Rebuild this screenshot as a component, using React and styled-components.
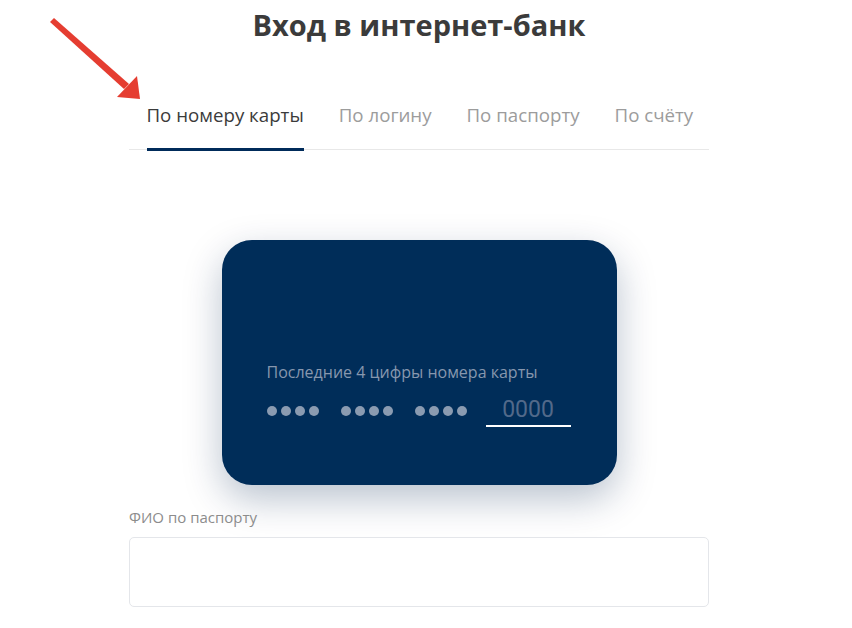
import React from "react";
import styled, { createGlobalStyle } from "styled-components";

const Global = createGlobalStyle`
  html, body { margin: 0; padding: 0; background: #fff; }
  body { font-family: "Open Sans", "Noto Sans", sans-serif; }
`;

const Page = styled.div`
  position: relative;
  width: 852px;
  height: 628px;
  overflow: hidden;
  background: #fff;
`;

const Container = styled.div`
  width: 580px;
  margin-left: 129px;
  display: flex;
  flex-direction: column;
`;

const Title = styled.h1`
  margin: 6px 0 0;
  font-size: 29px;
  font-weight: 700;
  line-height: 38px;
  color: #3b3b3b;
  text-align: center;
`;

const Tabs = styled.div`
  display: flex;
  margin-top: 58px;
  border-bottom: 1px solid #e8e8e8;
`;

const Tab = styled.div`
  padding: 0 17.5px;
  font-size: 18.7px;
  line-height: 26px;
  color: ${(p) => (p.$active ? "#3b3b3b" : "#9c9c9c")};
  white-space: nowrap;
`;

const TabLabel = styled.div`
  padding-bottom: 20px;
  border-bottom: 3px solid ${(p) => (p.$active ? "#002b5a" : "transparent")};
  margin-bottom: -2px;
`;

const CardWrap = styled.div`
  display: flex;
  justify-content: center;
  margin-top: 90px;
`;

const Card = styled.div`
  width: 395px;
  height: 245px;
  border-radius: 30px;
  background: #002d59;
  box-shadow: 0 14px 38px rgba(0, 35, 80, 0.28);
  box-sizing: border-box;
  padding: 121px 45px 0;
  display: flex;
  flex-direction: column;
`;

const CardLabel = styled.div`
  font-size: 16px;
  line-height: 22px;
  color: #8797ae;
`;

const DigitsRow = styled.div`
  display: flex;
  align-items: center;
  margin-top: 12px;
`;

const DotGroup = styled.div`
  display: flex;
  gap: 4px;
  margin-right: 22px;
`;

const Dot = styled.span`
  width: 10px;
  height: 10px;
  border-radius: 50%;
  background: #8a9bb1;
`;

const LastDigits = styled.div`
  width: 85px;
  margin-left: -3px;
  text-align: center;
  font-family: "Roboto", "Open Sans", sans-serif;
  font-size: 23px;
  line-height: 30px;
  color: #52698a;
  border-bottom: 2px solid #ffffff;
`;

const Field = styled.div`
  display: flex;
  flex-direction: column;
  margin-top: 22px;
`;

const FieldLabel = styled.label`
  font-size: 15px;
  line-height: 20px;
  color: #8c8c8c;
`;

const Input = styled.div`
  margin-top: 10px;
  height: 70px;
  box-sizing: border-box;
  border: 1px solid #e4e6ea;
  border-radius: 5px;
  background: #fff;
`;

const Arrow = styled.svg`
  position: absolute;
  left: 0;
  top: 0;
  pointer-events: none;
`;

export default function App() {
  const tabs = ["По номеру карты", "По логину", "По паспорту", "По счёту"];
  return (
    <Page>
      <Global />
      <Container>
        <Title>Вход в интернет-банк</Title>
        <Tabs>
          {tabs.map((t, i) => (
            <Tab key={t} $active={i === 0}>
              <TabLabel $active={i === 0}>{t}</TabLabel>
            </Tab>
          ))}
        </Tabs>
        <CardWrap>
          <Card>
            <CardLabel>Последние 4 цифры номера карты</CardLabel>
            <DigitsRow>
              {[0, 1, 2].map((g) => (
                <DotGroup key={g}>
                  {[0, 1, 2, 3].map((d) => (
                    <Dot key={d} />
                  ))}
                </DotGroup>
              ))}
              <LastDigits>0000</LastDigits>
            </DigitsRow>
          </Card>
        </CardWrap>
        <Field>
          <FieldLabel>ФИО по паспорту</FieldLabel>
          <Input />
        </Field>
      </Container>
      <Arrow width="852" height="628" viewBox="0 0 852 628">
        <polygon points="50,22 54,18 129,84 124,89" fill="#e53d31" />
        <polygon points="117,97 137,76 140,99" fill="#e53d31" />
      </Arrow>
    </Page>
  );
}
